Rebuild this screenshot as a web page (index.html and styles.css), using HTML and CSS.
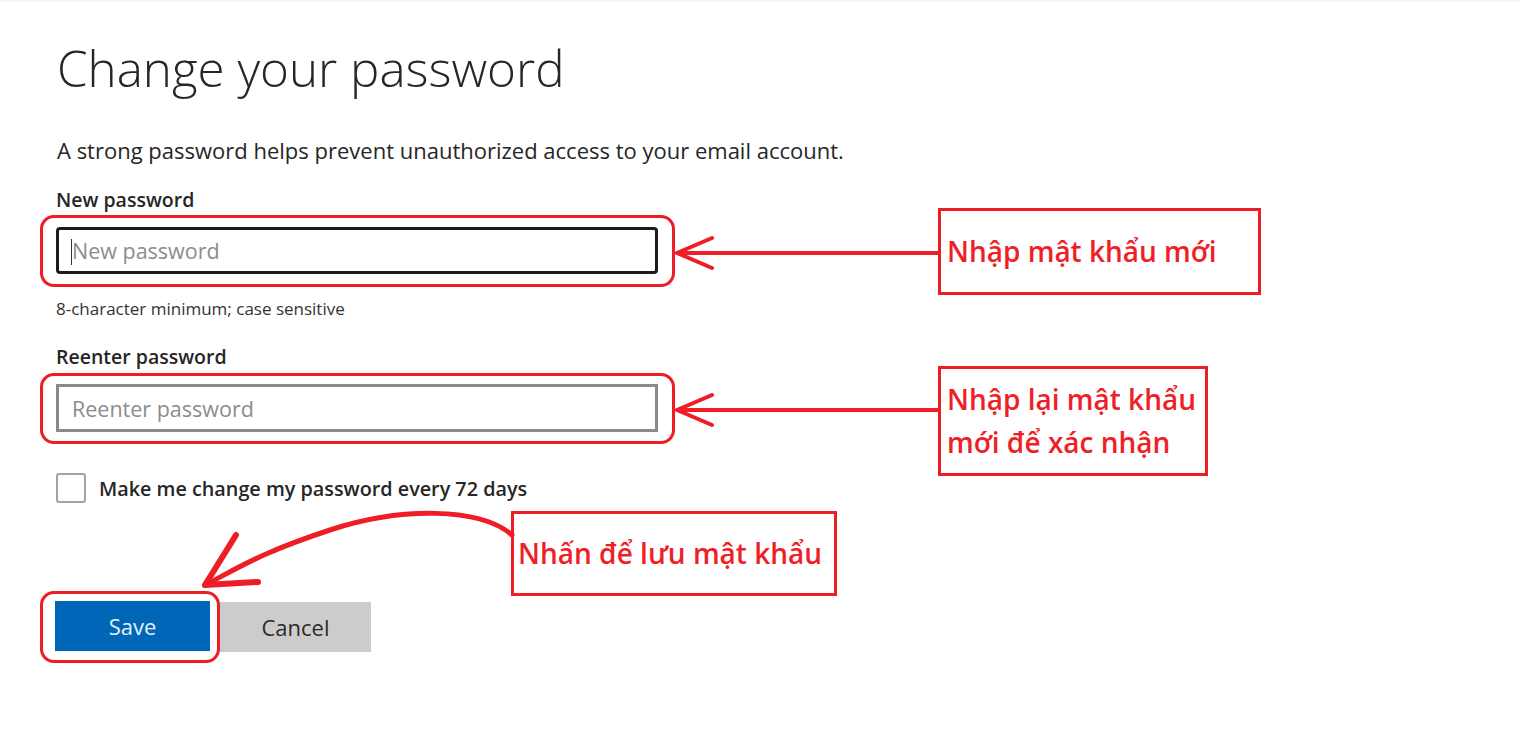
FILE: index.html
```html
<!DOCTYPE html>
<html lang="en">
<head>
  <meta charset="UTF-8" />
  <meta name="viewport" content="width=device-width, initial-scale=1.0"/>
  <title>Change your password</title>
  <link rel="stylesheet" href="styles.css">
</head>

<body>
  <div class="page">
    <!-- Password form -->
    <div class="form">
      <h1 class="title">Change your password</h1>
      <p class="intro">A strong password helps prevent unauthorized access to your email account.</p>

      <label class="field-label" for="newPass">New password</label>
      <div class="ring">
        <input id="newPass" class="text-input focused" type="password" placeholder="New password">
      </div>
      <p class="hint">8-character minimum; case sensitive</p>

      <label class="field-label second" for="reenterPass">Reenter password</label>
      <div class="ring ring-second">
        <input id="reenterPass" class="text-input" type="password" placeholder="Reenter password">
      </div>

      <label class="check-row">
        <span class="check-box"></span>
        <span class="check-text">Make me change my password every 72 days</span>
      </label>

      <div class="actions">
        <div class="ring ring-button">
          <button class="btn btn-save">Save</button>
        </div>
        <button class="btn btn-cancel">Cancel</button>
      </div>
    </div>

    <!-- Callouts over the form -->
    <svg class="arrows" width="1520" height="730" viewBox="0 0 1520 730">
      <g stroke="#ee1d26" stroke-width="4" stroke-linecap="round" fill="none">
        <path d="M677 251 H938 M677 251 L712 236 M677 251 L712 266"/>
        <path d="M677 408 H938 M677 408 L712 393 M677 408 L712 423"/>
      </g>
      <path d="M512 533 C 480 505, 400 505, 330 528 S 240 565, 205 583"
            stroke="#ee1d26" stroke-width="5" stroke-linecap="round" fill="none"/>
      <path d="M205 583 L236 533 M205 583 L258 580"
            stroke="#ee1d26" stroke-width="6" stroke-linecap="round" fill="none"/>
    </svg>

    <div class="note note-new">Nhập mật khẩu mới</div>
    <div class="note note-again">Nhập lại mật khẩu<br>mới để xác nhận</div>
    <div class="note note-save">Nhấn để lưu mật khẩu</div>
  </div>
</body>
</html>
```

FILE: styles.css
```css
body {
  margin: 0;
  padding: 0;
  background-color: #fff;
  border-top: 2px solid #eefaf0;
  font-family: "Open Sans", "Noto Sans", sans-serif;
  color: #1f1f1f;
}

.page {
  position: relative;
  width: 1520px;
  height: 728px;
}

.form {
  padding-left: 56px;
  display: flex;
  flex-direction: column;
  align-items: flex-start;
}

.title {
  margin: 36px 0 0 1px;
  font-size: 49.3px;
  line-height: 60px;
  font-weight: 300;
  color: #262626;
}

.intro {
  margin: 39px 0 0 1px;
  font-size: 22px;
  line-height: 26px;
  color: #262626;
}

.field-label {
  margin-top: 25px;
  font-size: 19.5px;
  line-height: 24px;
  font-weight: 600;
  color: #262626;
}

.field-label.second {
  margin-top: 26px;
}

.ring {
  margin: 3px 0 0 -16px;
  padding: 9px 14px 10px 13px;
  border: 3px solid #ec1d25;
  border-radius: 14px;
}

.ring-second {
  margin-top: 4px;
  padding: 8px 14px 9px 13px;
}

.text-input {
  display: block;
  box-sizing: border-box;
  width: 602px;
  height: 47px;
  padding: 0 13px;
  border: 3px solid #1c1c1c;
  border-radius: 4px;
  font-family: inherit;
  font-size: 21.5px;
  color: #222;
  outline: none;
}

.text-input.focused {
  background: linear-gradient(#333, #333) no-repeat 12px 9px / 1px 26px;
}

.ring-second .text-input {
  height: 48px;
  border-color: #8a8a8a;
  border-radius: 0;
}

.text-input::placeholder {
  color: #8c8c8c;
}

.hint {
  margin: 12px 0 0;
  font-size: 17px;
  line-height: 20px;
  color: #333;
}

.check-row {
  margin-top: 29px;
  display: flex;
  align-items: center;
  gap: 13px;
}

.check-box {
  box-sizing: border-box;
  width: 30px;
  height: 30px;
  border: 2px solid #a3a3a3;
  border-radius: 3px;
}

.check-text {
  font-size: 19.8px;
  font-weight: 600;
  color: #262626;
}

.actions {
  margin-top: 88px;
  display: flex;
  align-items: center;
}

.ring-button {
  margin: 0 0 0 -16px;
  padding: 7px 7px 9px 12px;
}

.btn {
  height: 50px;
  border: none;
  font-family: inherit;
  font-size: 22px;
  cursor: pointer;
}

.btn-save {
  display: block;
  width: 155px;
  background-color: #0067b8;
  color: #e4f1fb;
}

.btn-cancel {
  width: 151px;
  margin-left: 0;
  padding-right: 6px;
  background-color: #cccccc;
  color: #2a2a2a;
}

/* callouts */
.arrows {
  position: absolute;
  left: 0;
  top: 0;
  pointer-events: none;
}

.note {
  position: absolute;
  box-sizing: border-box;
  display: flex;
  align-items: center;
  padding-left: 6px;
  border: 3px solid #ec1d25;
  font-family: "Open Sans", "Noto Sans", sans-serif;
  font-weight: 600;
  font-size: 28px;
  line-height: 43px;
  color: #ef1f28;
}

.note-new {
  left: 938px;
  top: 206px;
  width: 323px;
  height: 87px;
}

.note-again {
  left: 938px;
  top: 364px;
  width: 270px;
  height: 110px;
}

.note-save {
  left: 511px;
  top: 509px;
  width: 326px;
  height: 85px;
  padding-left: 4px;
}
```
